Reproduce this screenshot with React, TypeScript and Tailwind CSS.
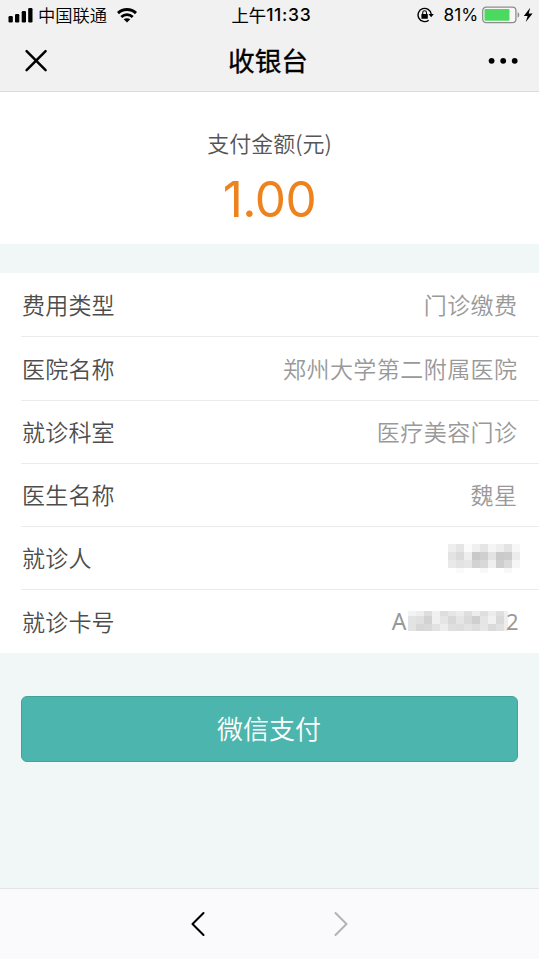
import React from 'react';

const NAME_MASK: string[][] = [
  ['#eeeeee', '#e5e5e5', '#fbfbfb', '#f0f0f0', '#e5e5e5', '#f5f5f5', '#eeeeee', '#e3e3e3', '#f7f7f7'],
  ['#e3e3e3', '#dadada', '#eeeeee', '#c9c9c9', '#cfcfcf', '#e3e3e3', '#cacaca', '#cccccc', '#ececec'],
  ['#e9e9e9', '#e3e3e3', '#e6e6e6', '#d3d3d3', '#d8d8d8', '#efefef', '#cecece', '#dadada', '#f6f6f6'],
  ['#ffffff', '#fafafa', '#ffffff', '#ffffff', '#f8f8f8', '#ffffff', '#ffffff', '#f8f8f8', '#ffffff'],
];

const CARD_MASK: string[][] = [
  ['#f3f3f3', '#eeeeee', '#dedede', '#f1f1f1', '#dedede', '#e6e6e6', '#ececec', '#dfdfdf', '#ededed', '#dfdfdf', '#ececec', '#dfdfdf', '#f0f0f0'],
  ['#e3e3e3', '#e0e0e0', '#d2d2d2', '#f0f0f0', '#e5e5e5', '#d8d8d8', '#e5e5e5', '#dadada', '#cfcfcf', '#e5e5e5', '#f1f1f1', '#d9d9d9', '#eeeeee'],
  ['#e3e3e3', '#d7d7d7', '#d9d9d9', '#e2e2e2', '#ededed', '#dfdfdf', '#dddddd', '#e3e3e3', '#dedede', '#e6e6e6', '#dadada', '#e1e1e1', '#eeeeee'],
];

function Mosaic({ cells, rows, width }: { cells: string[][]; rows: number[]; width: number }) {
  const height = rows.reduce((a, b) => a + b, 0);
  let y = 0;
  return (
    <svg width={width} height={height} shapeRendering="crispEdges" className="block shrink-0" aria-hidden="true">
      {cells.map((line, r) => {
        const top = y;
        y += rows[r];
        return line.map((fill, c) => (
          <rect key={`${r}-${c}`} x={c * 8} y={top} width={8} height={rows[r]} fill={fill} />
        ));
      })}
    </svg>
  );
}

function StatusBar() {
  return (
    <div className="grid h-[30px] grid-cols-[1fr_auto_1fr] items-center text-[17px] leading-[30px] text-black">
      <div className="flex items-center pl-2">
        <svg width="25" height="15" viewBox="0 0 25 15" aria-hidden="true">
          <rect x="0.5" y="8" width="4.3" height="6.5" rx="1.2" />
          <rect x="7" y="6" width="4.3" height="8.5" rx="1.2" />
          <rect x="13.7" y="3" width="4.3" height="11.5" rx="1.2" />
          <rect x="20.2" y="0" width="4.3" height="14.5" rx="1.2" />
        </svg>
        <span className="ml-[5px] text-[17.3px]">中国联通</span>
        <svg className="ml-[10px]" width="20" height="15" viewBox="0 0 20 15" fill="none" stroke="#000" aria-hidden="true">
          <path d="M1 5.1C6 0.3 14 0.3 19 5.1" strokeWidth="3" />
          <path d="M4.3 8.9C7.5 5.8 12.5 5.8 15.7 8.9" strokeWidth="2.8" />
          <path d="M10 14.5L6.7 11.3C8.6 9.8 11.4 9.8 13.3 11.3Z" fill="#000" stroke="none" />
        </svg>
      </div>
      <div className="flex pl-1">
        <span className="text-[17.3px] font-normal [-webkit-text-stroke:0.15px_#000]">上午</span>
        <span className="font-[Inter,sans-serif] text-[17.5px] font-medium tracking-[0.7px]">11:33</span>
      </div>
      <div className="flex items-center justify-end pr-[6px]">
        <svg width="17" height="16" viewBox="0 0 17 16" fill="none" stroke="#000" aria-hidden="true">
          <path d="M11.7 13.2A6.6 6.6 0 1 1 14.2 7" strokeWidth="1.4" />
          <path d="M11.5 7H16.8L14.2 10.2Z" fill="#000" stroke="none" />
          <rect x="4.4" y="7" width="6.4" height="4.8" rx="0.5" fill="#000" stroke="none" />
          <path d="M5.7 7V5.7a1.9 1.9 0 0 1 3.8 0V7" strokeWidth="1.1" />
        </svg>
        <span className="ml-[10px] font-[Inter,sans-serif] text-[17.3px] font-normal tracking-[-0.1px]">81%</span>
        <svg className="ml-1" width="51" height="18" viewBox="0 0 51 18" aria-hidden="true">
          <rect x="0.7" y="1.2" width="33.2" height="15.4" rx="3.4" fill="#f7f7f7" stroke="#8d8d90" strokeWidth="1.3" />
          <rect x="2.5" y="3" width="25" height="11.8" rx="1.2" fill="#4cd95f" />
          <path d="M35.6 6.2C37.8 6.6 37.8 11.2 35.6 11.6Z" fill="#8d8d90" />
          <path d="M48.2 1.8L41.8 9.9H45.6L43.8 16L50.6 7.6H46.7Z" />
        </svg>
      </div>
    </div>
  );
}

function Row({ label, children, tall = false, last = false }: { label: string; children: React.ReactNode; tall?: boolean; last?: boolean }) {
  return (
    <div className={`ml-[21px] flex items-center justify-between pr-[21.5px] pl-px ${tall ? 'h-16' : 'h-[63px]'} ${last ? '' : 'border-b border-[#ebebeb]'}`}>
      <span className={`text-[23px] leading-8 tracking-[0.2px] text-[#4d4d4d] ${tall || last ? '-mt-px' : '-mt-[3px]'}`}>{label}</span>
      <span className={`flex items-center text-[23px] leading-8 tracking-[0.45px] text-[#999] ${tall || last ? '-mt-px' : '-mt-[3px]'}`}>{children}</span>
    </div>
  );
}

export default function App() {
  return (
    <div className="flex h-[959px] w-[539px] flex-col overflow-hidden bg-[#f1f7f7] font-['Noto_Sans_CJK_SC',sans-serif] font-[350]">
      <header className="h-[92px] shrink-0 border-b border-[#dcdcdc] bg-[#f1f1f1]">
        <StatusBar />
        <div className="grid h-[61px] grid-cols-[1fr_auto_1fr] items-center">
          <svg className="ml-6" width="24" height="24" viewBox="0 0 24 24" fill="none" stroke="#000" strokeWidth="2.5" strokeLinecap="round" aria-label="关闭">
            <path d="M2.6 2.1L21.6 21.1M21.6 2.1L2.6 21.1" />
          </svg>
          <h1 className="-mt-[2px] -ml-[3px] text-[26.7px] font-normal leading-9 text-black [-webkit-text-stroke:0.35px_#000]">收银台</h1>
          <svg className="mr-5 justify-self-end" width="32" height="8" viewBox="0 0 32 8" aria-label="更多">
            <circle cx="4.6" cy="3.8" r="2.9" />
            <circle cx="16.2" cy="3.8" r="2.9" />
            <circle cx="27.7" cy="3.8" r="2.9" />
          </svg>
        </div>
      </header>

      <section className="flex h-[152px] shrink-0 flex-col items-center bg-white pt-[34px]">
        <p className="text-[22px] leading-8 text-[#555]">支付金额(元)</p>
        <p className="mt-[11px] font-[Inter,sans-serif] text-[49.5px] font-normal leading-[60px] tracking-[-0.5px] text-[#ee821d]">1.00</p>
      </section>

      <section className="mt-[29px] flex h-[380px] shrink-0 flex-col bg-white">
        <Row label="费用类型" tall>门诊缴费</Row>
        <Row label="医院名称" tall>郑州大学第二附属医院</Row>
        <Row label="就诊科室">医疗美容门诊</Row>
        <Row label="医生名称">魏星</Row>
        <Row label="就诊人">
          <span className="-mr-[2.5px] pt-[3px]">
            <Mosaic cells={NAME_MASK} rows={[8, 8, 8, 5]} width={72} />
          </span>
        </Row>
        <Row label="就诊卡号" last>
          <span className="mr-px font-['Noto_Sans',sans-serif] font-normal">A</span>
          <Mosaic cells={CARD_MASK} rows={[5, 8, 7]} width={100} />
          <span className="-ml-[2px] font-['Noto_Sans',sans-serif] text-[22px] font-normal tracking-[-1px]">2</span>
        </Row>
      </section>

      <button className="mx-[21px] mt-[43px] h-[66px] shrink-0 rounded-[6px] border border-[#45a298] bg-[#4cb5ad] pr-px pb-1 text-[26px] font-[350] text-white">
        微信支付
      </button>

      <nav className="mt-auto flex h-[71px] shrink-0 items-center justify-center gap-[127px] border-t border-[#e2e4e5] bg-[#fafafc]">
        <svg width="16" height="26" viewBox="0 0 16 26" fill="none" stroke="#000" strokeWidth="2.1" strokeLinecap="round" strokeLinejoin="round" aria-label="后退">
          <path d="M13.5 2L2.5 13L13.5 24" />
        </svg>
        <svg width="16" height="26" viewBox="0 0 16 26" fill="none" stroke="#b2b2b4" strokeWidth="2" strokeLinecap="round" strokeLinejoin="round" aria-label="前进">
          <path d="M2.5 2L13.5 13L2.5 24" />
        </svg>
      </nav>
    </div>
  );
}
